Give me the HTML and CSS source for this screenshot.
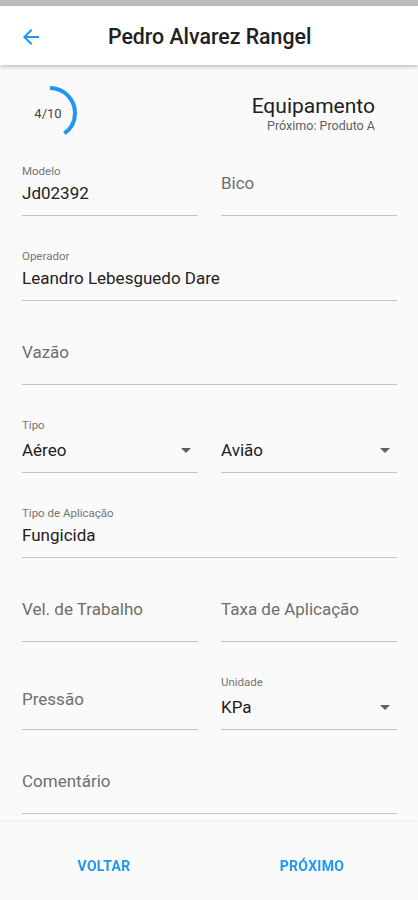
FILE: index.html
```html
<!DOCTYPE html>
<html lang="pt-BR">

<head>
    <meta charset="UTF-8">
    <title>Equipamento</title>
    <link rel="stylesheet" href="styles.css">
</head>

<body>
    <div class="status"></div>

    <header class="appbar">
        <button class="back" type="button">
            <svg width="24" height="24" viewBox="0 0 24 24">
                <path d="M20 11H7.83l5.59-5.59L12 4l-8 8 8 8 1.41-1.41L7.83 13H20v-2z" fill="#2196f3"/>
            </svg>
        </button>
        <h1>Pedro Alvarez Rangel</h1>
    </header>

    <main class="content">
        <section class="step">
            <div class="progress">
                <svg width="60" height="60" viewBox="0 0 60 60">
                    <circle cx="30" cy="30" r="25" fill="none" stroke="#2196f3" stroke-width="4"
                        stroke-dasharray="62.8 200" transform="rotate(-90 30 30)"/>
                </svg>
                <span>4/10</span>
            </div>
            <div class="step-title">
                <h2>Equipamento</h2>
                <small>Próximo: Produto A</small>
            </div>
        </section>

        <div class="row">
            <div class="field">
                <label>Modelo</label>
                <div class="value">Jd02392</div>
            </div>
            <div class="field empty">
                <div class="value">Bico</div>
            </div>
        </div>

        <div class="row">
            <div class="field">
                <label>Operador</label>
                <div class="value">Leandro Lebesguedo Dare</div>
            </div>
        </div>

        <div class="row">
            <div class="field empty">
                <div class="value">Vazão</div>
            </div>
        </div>

        <div class="row">
            <div class="field select">
                <label>Tipo</label>
                <div class="value">Aéreo <span class="caret"></span></div>
            </div>
            <div class="field select">
                <label>&nbsp;</label>
                <div class="value">Avião <span class="caret"></span></div>
            </div>
        </div>

        <div class="row">
            <div class="field">
                <label>Tipo de Aplicação</label>
                <div class="value">Fungicida</div>
            </div>
        </div>

        <div class="row">
            <div class="field empty">
                <div class="value">Vel. de Trabalho</div>
            </div>
            <div class="field empty">
                <div class="value">Taxa de Aplicação</div>
            </div>
        </div>

        <div class="row">
            <div class="field empty short">
                <div class="value">Pressão</div>
            </div>
            <div class="field select">
                <label>Unidade</label>
                <div class="value">KPa <span class="caret"></span></div>
            </div>
        </div>

        <div class="row">
            <div class="field empty">
                <div class="value">Comentário</div>
            </div>
        </div>
    </main>

    <footer class="actions">
        <button type="button">VOLTAR</button>
        <button type="button" class="next">PRÓXIMO</button>
    </footer>
</body>

</html>
```

FILE: styles.css
```css
body {
    margin: 0;
    font-family: Roboto, "Noto Sans", sans-serif;
    background: #fafafa;
    color: #212121;
    width: 418px;
    height: 900px;
    overflow: hidden;
}

.status {
    height: 6px;
    background: #bdbdbd;
}

.appbar {
    height: 59px;
    box-sizing: border-box;
    padding-top: 2px;
    background: #fff;
    display: flex;
    align-items: center;
    box-shadow: 0 2px 4px rgba(0, 0, 0, 0.22);
    position: relative;
}

.back {
    border: none;
    background: none;
    padding: 0;
    margin-left: 19px;
    width: 24px;
    height: 24px;
    display: flex;
}

.appbar h1 {
    margin: 0 0 0 65px;
    font-size: 21.3px;
    font-weight: 500;
    color: #212121;
}

.content {
    padding: 0 21px 0 22px;
}

.step {
    display: flex;
    justify-content: space-between;
    align-items: center;
    height: 94px;
}

.progress {
    position: relative;
    width: 60px;
    height: 60px;
    margin-left: -2px;
    margin-top: 2px;
}

.progress span {
    position: absolute;
    inset: 0;
    display: flex;
    align-items: center;
    justify-content: center;
    font-size: 13px;
    color: #424242;
    padding-right: 4px;
}

.step-title {
    text-align: right;
    margin-right: 22px;
    margin-top: 3px;
}

.step-title h2 {
    margin: 0;
    font-size: 21px;
    font-weight: 400;
    line-height: 24px;
}

.step-title small {
    display: block;
    font-size: 12.5px;
    line-height: 16px;
    color: #616161;
}

.row {
    display: flex;
    gap: 23px;
    align-items: flex-end;
    margin-top: 32px;
}

.step + .row {
    margin-top: 4px;
}

.field {
    flex: 1;
    border-bottom: 1px solid #c4c4c4;
    padding-bottom: 10px;
}

.field label {
    display: block;
    font-size: 11.5px;
    line-height: 16px;
    color: #757575;
}

.field .value {
    font-size: 17px;
    line-height: 24px;
    margin-top: 2px;
    display: flex;
    justify-content: space-between;
    align-items: center;
}

.field.empty {
    padding-top: 7px;
    padding-bottom: 20px;
}

.field.empty .value {
    margin-top: 0;
    color: #6e6e6e;
}

.field.short {
    padding-bottom: 18px;
}

.field.select .value {
    margin-top: 5px;
}

.field.select {
    padding-bottom: 10px;
}

.caret {
    width: 0;
    height: 0;
    border-left: 5px solid transparent;
    border-right: 5px solid transparent;
    border-top: 5px solid #616161;
    margin-right: 7px;
}

.actions {
    position: fixed;
    left: 0;
    right: 0;
    bottom: 0;
    height: 78px;
    display: flex;
    background: #fafafa;
    box-shadow: 0 -1px 2px rgba(0, 0, 0, 0.06);
}

.actions button {
    flex: 1;
    border: none;
    background: none;
    font-family: Roboto, sans-serif;
    font-size: 14px;
    font-weight: 700;
    color: #2196f3;
    letter-spacing: 0.3px;
    padding-top: 10px;
}

.actions .next {
    padding-right: 8px;
}
```
